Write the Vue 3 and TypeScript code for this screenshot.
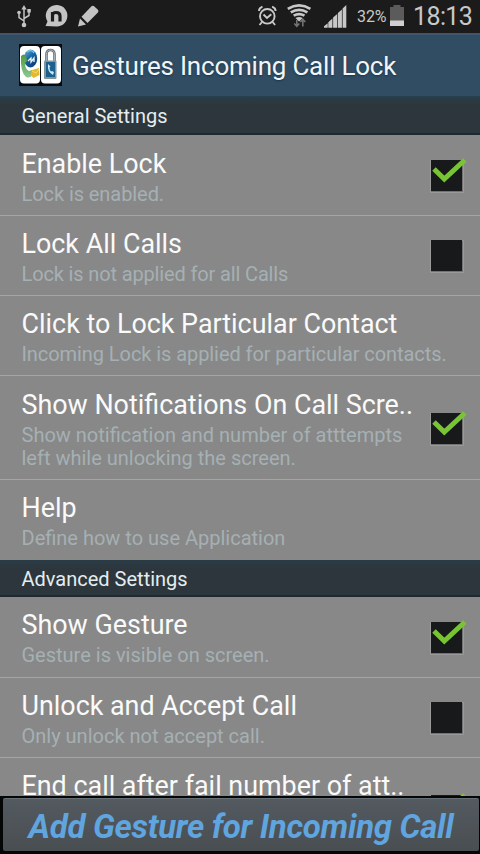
<script setup lang="ts">
interface Setting {
  title: string
  summary: string[]
  checked?: boolean
  spacing?: 'tight' | 'snug'
  tall?: boolean
}
interface Section {
  name: string
  items: Setting[]
}

const sections: Section[] = [
  {
    name: 'General Settings',
    items: [
      { title: 'Enable Lock', summary: ['Lock is enabled.'], checked: true, spacing: 'snug' },
      { title: 'Lock All Calls', summary: ['Lock is not applied for all Calls'], checked: false, spacing: 'tight' },
      {
        title: 'Click to Lock Particular Contact',
        summary: ['Incoming Lock is applied for particular contacts.'],
        spacing: 'snug',
      },
      {
        title: 'Show Notifications On Call Scre..',
        summary: ['Show notification and number of atttempts', 'left while unlocking the screen.'],
        checked: true,
        tall: true,
      },
      { title: 'Help', summary: ['Define how to use Application'] },
    ],
  },
  {
    name: 'Advanced Settings',
    items: [
      { title: 'Show Gesture', summary: ['Gesture is visible on screen.'], checked: true },
      { title: 'Unlock and Accept Call', summary: ['Only unlock not accept call.'], checked: false },
      { title: 'End call after fail number of att..', summary: [], checked: true, tall: true },
    ],
  },
]
</script>

<template>
  <main class="screen">
    <div class="status">
      <svg class="status-left" width="104" height="32" viewBox="0 0 104 32">
        <g fill="none" stroke="#c4c4c4" stroke-width="1.5">
          <path d="M24 8v16M24 21l-5-3.500v-5M24 18.500l5-3v-5" />
        </g>
        <g fill="#c4c4c4">
          <path d="M24 5l2.600 4.500h-5.200z" />
          <circle cx="24" cy="25" r="2.300" />
          <circle cx="19" cy="12.500" r="1.800" />
          <path d="M27.300 9h3.500v3.500h-3.500z" />
          <path d="M45.500 26l2-4.500A10.800 10.800 0 1 1 56.500 26.500z" />
          <path d="M78 26.500l2-8 6 6zM81.500 16.800l10-10.600q1.300-1 2.600 0l3.800 3.600q1.200 1.300 0 2.600l-10.400 10.500z" />
        </g>
        <path d="M52.500 21.500v-9.500M52.500 15.500q0-3 3.500-3 4 0 4 3.500v5.500" fill="none" stroke="#1b1b1b" stroke-width="3.200" />
      </svg>
      <svg class="status-right" width="96" height="32" viewBox="254 0 96 32">
        <g fill="none" stroke="#c8c8c8" stroke-width="1.900">
          <circle cx="267.300" cy="16.300" r="7.300" />
          <path d="M263.500 14.500l3.500 3.400 4.300-3.600M259 11q0-3 3.500-4.300M275.600 11q0-3-3.500-4.300M262 22l-2.500 3M272.600 22l2.500 3" />
        </g>
        <g fill="none" stroke="#c8c8c8" stroke-width="2.700">
          <path d="M287.800 8.800q11.300-6.800 22.600 0M290.800 12.400q8.300-5 16.600 0M293.700 15.700q5.400-3.200 10.800 0" />
        </g>
        <path d="M295.500 17.900q3.600-2 7.200 0l-3.600 3.600z" fill="#c8c8c8" />
        <g fill="none" stroke="#737373" stroke-width="1.600">
          <path d="M296.800 20v6M294.300 23.500l2.500 2.700 2.500-2.700M302.800 26.500v-7M300.300 22l2.500-2.700 2.500 2.700" />
        </g>
        <path d="M324 27.800v-1.500l3.700-3v4.500zM328.300 27.800v-5.600l4.100-3.700v9.300zM333.100 27.800v-10.200l4.100-3.700v13.900zM337.900 27.800v-14.700l4-3.600v18.300zM342.600 27.800V8.400l3.700-3.300v22.700z" fill="#c8c8c8" />
      </svg>
      <span class="percent">32%</span>
      <svg class="battery" width="16" height="24" viewBox="0 0 16 24">
        <path d="M4.500 1h7v2H15v19H1V3h3.500z" fill="#5b5b5b" />
        <path d="M1 16.500h14V22H1z" fill="#d0d0d0" />
      </svg>
      <span class="clock">18:13</span>
    </div>

    <header class="app-bar">
      <svg class="app-icon" width="43" height="42" viewBox="0 0 43 42">
        <defs>
          <linearGradient id="globe" x2=".7" y2="1">
            <stop offset="0" stop-color="#74b8d8" />
            <stop offset=".5" stop-color="#1767a6" />
            <stop offset="1" stop-color="#113c78" />
          </linearGradient>
          <linearGradient id="phone" x2="0" y2="1">
            <stop offset="0" stop-color="#4c9b3d" />
            <stop offset="1" stop-color="#91c896" />
          </linearGradient>
        </defs>
        <path d="M0 0h43v42H0z" fill="#070b0e" />
        <rect x="1" y="2" width="20" height="37.500" rx="4" fill="#fff" />
        <rect x="22" y="2" width="20" height="37.500" rx="4" fill="#fff" />
        <ellipse cx="11.500" cy="14.500" rx="6.700" ry="9" fill="url(#globe)" />
        <path d="M8 8q5-3 7 1" fill="none" stroke="#82cae6" stroke-width="1.200" />
        <path d="M2 12q3-3 5 0l1 5-2 2q0 6 4 8l3-1 1 4q-3 5-7 3Q1 28 2 12z" fill="url(#phone)" />
        <path d="M9 17l3-3v4l3-4v4" fill="none" stroke="#e8f5fa" stroke-width="1.300" />
        <path d="M13 26l7-2 .500 7-6 3-3-3z" fill="#e5b92d" />
        <path d="M13 27l4 2 3-4" fill="none" stroke="#f7dc68" />
        <path d="M27.500 18v-7.500q0-4.500 4-4.500t4 4.500v7.500" fill="none" stroke="#686e71" stroke-width="2.600" />
        <path d="M27.500 18v-7.500q0-4.500 4-4.500t4 4.500v7.500" fill="none" stroke="#b9c1c4" stroke-width=".800" />
        <rect x="25" y="16.500" width="12.500" height="18.500" rx="1" fill="#84969b" />
        <rect x="27" y="18" width="9" height="15" fill="#1c608f" />
        <path d="M29 20q-1 8 5 11l1-3-2-1-1 .500q-1.600-2-1.500-4l1-1z" fill="#c9e8f4" />
      </svg>
      <h1>Gestures Incoming Call Lock</h1>
    </header>

    <div class="list">
      <section v-for="section in sections" :key="section.name">
        <h2>{{ section.name }}</h2>
        <div v-for="item in section.items" :key="item.title" class="row" :class="{ tall: item.tall }">
          <div class="copy">
            <div class="title">{{ item.title }}</div>
            <div class="summary" :class="item.spacing">
              <div v-for="line in item.summary" :key="line">{{ line }}</div>
            </div>
          </div>
          <svg v-if="item.checked !== undefined" class="check" width="40" height="40" viewBox="0 0 40 40">
            <path d="M2.500 5.500h33v32h-33z" fill="#737373" stroke="#9a9a9a" />
            <path d="M3 5h31v31H3z" fill="#17191a" />
            <path v-if="item.checked" d="M6 14l10.300 10L36.800 5" fill="none" stroke="#79c435" stroke-width="5" />
          </svg>
        </div>
      </section>
    </div>

    <footer>
      <button type="button">Add Gesture for Incoming Call</button>
    </footer>
  </main>
</template>

<style>
body {
  margin: 0;
  background: #000;
}
</style>

<style scoped>
.screen {
  width: 480px;
  height: 854px;
  display: flex;
  flex-direction: column;
  overflow: hidden;
  background: #888;
  font-family: Roboto, sans-serif;
}
.status {
  height: 33px;
  flex: none;
  display: flex;
  align-items: flex-start;
  background: #1b1b1b;
  color: #c8c8c8;
}
.status-left {
  margin-right: 150px;
}
.status svg {
  flex: none;
}
.percent {
  width: 34px;
  margin-left: 7px;
  font-size: 16px;
  line-height: 33px;
  letter-spacing: -0.1px;
}
.battery {
  margin: 4px 0 0 -2px;
}
.clock {
  margin-left: 8px;
  font-size: 25px;
  line-height: 33px;
  letter-spacing: -0.6px;
  white-space: nowrap;
}
.app-bar {
  height: 64px;
  flex: none;
  box-sizing: border-box;
  display: flex;
  align-items: flex-start;
  padding: 11px 0 0 19px;
  border-top: 2px solid #41566e;
  border-bottom: 1px solid #26404f;
  background: #314d64;
}
.app-icon {
  margin-top: -2px;
}
h1 {
  margin: 0 0 0 10px;
  font-size: 26px;
  font-weight: 400;
  line-height: 40px;
  letter-spacing: -0.22px;
  color: #f1f5f7;
  white-space: nowrap;
  text-shadow: 0 1px 2px #17354a;
}
.list {
  flex: 1;
  min-height: 0;
  overflow: hidden;
}
h2 {
  height: 38.4px;
  margin: 0;
  box-sizing: border-box;
  padding-left: 21.5px;
  border-bottom: 2px solid #202a2e;
  background: linear-gradient(#2b3c47, #2c363c 25%, #2c373d);
  color: #e4edef;
  font-size: 20px;
  font-weight: 400;
  line-height: 38px;
}
.row {
  display: flex;
  align-items: center;
  justify-content: space-between;
  height: 80.33px;
  box-sizing: border-box;
  padding: 0 12px 0 21.5px;
  border-bottom: 1px solid #a5a5a5;
}
.row.tall {
  height: 103.33px;
}
.row:last-child {
  border-bottom: 0;
}
section + section h2 {
  height: 37.2px;
}
.copy {
  align-self: flex-start;
  padding-top: 10.2px;
}
.title {
  color: #fafafa;
  font-size: 26.88px;
  line-height: 36px;
  white-space: nowrap;
}
.summary {
  padding-top: 1px;
  color: #a5b0b3;
  font-size: 20px;
  line-height: 23.33px;
  white-space: nowrap;
}
.summary.tight {
  letter-spacing: -0.14px;
}
.summary.snug {
  letter-spacing: -0.07px;
}
.check {
  flex: none;
}
footer {
  height: 58px;
  flex: none;
  box-sizing: border-box;
  padding: 2px 1px 3px 3px;
  background: #050606;
}
button {
  display: block;
  width: 100%;
  height: 53px;
  box-sizing: border-box;
  padding: 4px 0 0;
  border: 0;
  border-top: 1px solid #687078;
  border-radius: 2px;
  background: linear-gradient(#535a60, #494e51);
  color: #60a5df;
  font: italic 700 33px/48px Roboto, sans-serif;
  letter-spacing: -0.31px;
  white-space: nowrap;
}
</style>
